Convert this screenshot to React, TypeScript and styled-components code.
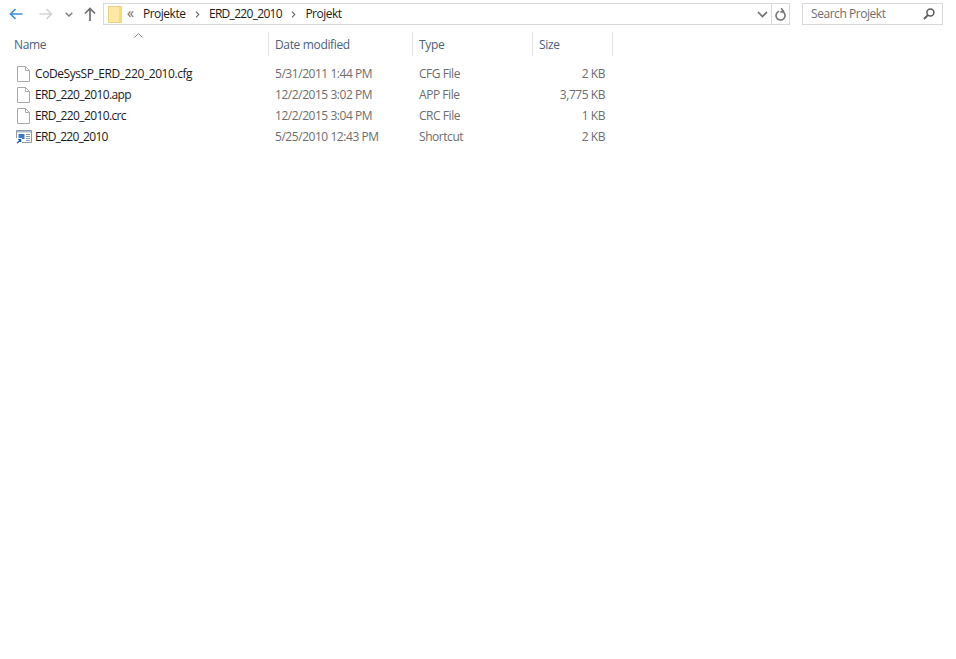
import React from "react";
import styled, { createGlobalStyle } from "styled-components";

const Global = createGlobalStyle`
  html, body { margin: 0; padding: 0; background: #fff; }
  body { font-family: "Open Sans", "Noto Sans", "Liberation Sans", sans-serif; font-size: 12px; }
`;

const Page = styled.div`
  width: 956px;
  height: 659px;
  overflow: hidden;
  background: #fff;
  display: flex;
  flex-direction: column;
`;

const Toolbar = styled.div`
  display: flex;
  align-items: center;
  height: 22px;
  padding: 3px 13px 0 0;
`;

const NavButton = styled.button<{ $w: number }>`
  width: ${(p) => p.$w}px;
  height: 22px;
  padding: 0;
  border: 0;
  background: none;
  display: flex;
  align-items: center;
  justify-content: center;
`;

const AddressBar = styled.div`
  margin-left: 3px;
  width: 687px;
  height: 22px;
  box-sizing: border-box;
  border: 1px solid #d9d9d9;
  display: flex;
  align-items: center;
`;

const FolderSlot = styled.div`
  width: 21px;
  display: flex;
  justify-content: center;
`;

const Crumb = styled.span<{ $track: number }>`
  color: #1a1a1a;
  white-space: nowrap;
  letter-spacing: ${(p) => p.$track}px;
  margin-top: -2px;
`;

const Chevrons = styled.span`
  color: #666;
  width: 18px;
  padding-right: 7px;
  box-sizing: border-box;
  text-align: center;
  font-size: 14px;
  line-height: 1;
  margin-top: -2px;
`;

const CrumbSep = styled.span`
  width: 23.5px;
  display: flex;
  justify-content: center;
`;

const Spacer = styled.div`
  flex: 1;
`;

const AddressEnd = styled.div`
  width: 17px;
  height: 20px;
  display: flex;
  align-items: center;
  justify-content: center;
`;

const Refresh = styled.div`
  width: 17px;
  height: 20px;
  border-left: 1px solid #d9d9d9;
  display: flex;
  align-items: center;
  justify-content: center;
`;

const SearchBox = styled.div`
  margin-left: 12px;
  width: 141px;
  height: 22px;
  box-sizing: border-box;
  border: 1px solid #d9d9d9;
  display: flex;
  align-items: center;
  justify-content: space-between;
  padding: 0 7px 0 8px;
`;

const SearchText = styled.span`
  color: #6d6d6d;
  letter-spacing: -0.45px;
  margin-top: -2px;
`;

const Header = styled.div`
  position: relative;
  display: flex;
  height: 24px;
  margin-top: 7px;
  margin-left: 8px;
`;

const HeadCell = styled.div<{ $w: number }>`
  width: ${(p) => p.$w}px;
  box-sizing: border-box;
  padding-left: 6px;
  border-right: 1px solid #e5e5e5;
  color: #4c607a;
  display: flex;
  align-items: center;
  letter-spacing: -0.35px;
`;

const SortArrow = styled.svg`
  position: absolute;
  left: 126px;
  top: 1px;
`;

const Rows = styled.div`
  margin-top: 7px;
  margin-left: 8px;
  display: flex;
  flex-direction: column;
`;

const Row = styled.div`
  display: flex;
  height: 21px;
  align-items: center;
`;

const NameCell = styled.div<{ $track: number }>`
  width: 261px;
  box-sizing: border-box;
  padding-left: 7px;
  display: flex;
  align-items: center;
  gap: 3px;
  color: #1a1a1a;
  letter-spacing: ${(p) => p.$track}px;
  white-space: nowrap;
`;

const IconSlot = styled.span`
  width: 17px;
  height: 17px;
  display: flex;
  align-items: center;
  justify-content: center;
`;

const DetailCell = styled.div<{ $w: number; $right?: boolean }>`
  width: ${(p) => p.$w}px;
  box-sizing: border-box;
  padding: ${(p) => (p.$right ? "0 8px 0 0" : "0 0 0 6px")};
  text-align: ${(p) => (p.$right ? "right" : "left")};
  color: #6d6d6d;
  letter-spacing: -0.45px;
  white-space: nowrap;
`;

const BackIcon = () => (
  <svg width="14" height="12" viewBox="0 0 14 12" fill="none" stroke="#3f8fdc" strokeWidth="1.7">
    <path d="M13.5 6H1.5M6.5 1 1.5 6l5 5" />
  </svg>
);
const ForwardIcon = () => (
  <svg width="14" height="12" viewBox="0 0 14 12" fill="none" stroke="#d4d4d4" strokeWidth="1.7" style={{ marginLeft: 2 }}>
    <path d="M.5 6h12M7.5 1l5 5-5 5" />
  </svg>
);
const DownIcon = () => (
  <svg width="8" height="5" viewBox="0 0 8 5" fill="none" stroke="#7a7a7a" strokeWidth="1.4">
    <path d="M.7.7 4 4 7.3.7" />
  </svg>
);
const UpIcon = () => (
  <svg width="12" height="14" viewBox="0 0 12 14" fill="none" stroke="#6f6f6f" strokeWidth="1.7">
    <path d="M6 14V1.5M1 6.5l5-5 5 5" />
  </svg>
);
const FolderIcon = () => (
  <svg width="14" height="17" viewBox="0 0 14 17">
    <path d="M.5.5h12.8v16H.5z" fill="#fde8a6" stroke="#e8cf85" />
    <path d="M11 1h2v15h-2z" fill="#f6d985" />
  </svg>
);
const SepIcon = () => (
  <svg width="5" height="7" viewBox="0 0 5 7" fill="none" stroke="#6a6a6a" strokeWidth="1.1">
    <path d="M1 .7 3.8 3.5 1 6.3" />
  </svg>
);
const AddrDown = () => (
  <svg width="11" height="7" viewBox="0 0 11 7" fill="none" stroke="#6f6f6f" strokeWidth="1.7">
    <path d="M1 1l4.5 4.5L10 1" />
  </svg>
);
const RefreshIcon = () => (
  <svg width="11" height="13" viewBox="0 0 11 13" fill="none" stroke="#757575" strokeWidth="1.6">
    <path d="M4.2 3.2a4.5 4.5 0 1 0 3.2.2" />
    <path d="M3.2.6 5.4 3.4l-3 1.2" transform="translate(3 -.3)" />
  </svg>
);
const SearchIcon = () => (
  <svg width="12" height="12" viewBox="0 0 12 12" fill="none" stroke="#5c5c5c" strokeWidth="1.5">
    <circle cx="7.4" cy="4.6" r="3.5" />
    <path d="M4.8 7.2 1 11" strokeWidth="1.9" />
  </svg>
);
const FileIcon = () => (
  <svg width="13" height="16" viewBox="0 0 13 16" fill="#fff" stroke="#a9a9a9">
    <path d="M.5.5h8l4 4v11H.5z" />
    <path d="M8.5.5v4h4" fill="none" />
  </svg>
);
const ShortcutIcon = () => (
  <svg width="16" height="14" viewBox="0 0 16 14">
    <path d="M.5.5h15v12H.5z" fill="#fff" stroke="#8a98a8" />
    <path d="M1 1h14v1.5H1z" fill="#a9bcd0" />
    <path d="M2.5 4h6v5h-6z" fill="#3c7ac8" />
    <path d="M10 4.5h4M10 6.5h4M10 8.5h4M10 10.5h4" stroke="#8a98a8" />
    <path d="M0 8h6v6H0z" fill="#fff" />
    <path d="M1.2 13l3-3M2.2 9.5h2.5V12" stroke="#1f5fb5" strokeWidth="1.2" fill="none" />
  </svg>
);

const files = [
  { name: "CoDeSysSP_ERD_220_2010.cfg", date: "5/31/2011 1:44 PM", type: "CFG File", size: "2 KB", link: false, track: -0.43 },
  { name: "ERD_220_2010.app", date: "12/2/2015 3:02 PM", type: "APP File", size: "3,775 KB", link: false, track: -0.62 },
  { name: "ERD_220_2010.crc", date: "12/2/2015 3:04 PM", type: "CRC File", size: "1 KB", link: false, track: -0.62 },
  { name: "ERD_220_2010", date: "5/25/2010 12:43 PM", type: "Shortcut", size: "2 KB", link: true, track: -0.72 },
];

export default function App() {
  return (
    <Page>
      <Global />
      <Toolbar>
        <NavButton $w={32}><BackIcon /></NavButton>
        <NavButton $w={26}><ForwardIcon /></NavButton>
        <NavButton $w={22}><DownIcon /></NavButton>
        <NavButton $w={20}><UpIcon /></NavButton>
        <AddressBar>
          <FolderSlot><FolderIcon /></FolderSlot>
          <Chevrons>«</Chevrons>
          <Crumb $track={-0.5}>Projekte</Crumb>
          <CrumbSep><SepIcon /></CrumbSep>
          <Crumb $track={-0.7}>ERD_220_2010</Crumb>
          <CrumbSep><SepIcon /></CrumbSep>
          <Crumb $track={-0.5}>Projekt</Crumb>
          <Spacer />
          <AddressEnd><AddrDown /></AddressEnd>
          <Refresh><RefreshIcon /></Refresh>
        </AddressBar>
        <SearchBox>
          <SearchText>Search Projekt</SearchText>
          <SearchIcon />
        </SearchBox>
      </Toolbar>
      <Header>
        <SortArrow width="9" height="5" viewBox="0 0 9 5" fill="none" stroke="#8a8a8a">
          <path d="M.5 4.5l4-4 4 4" />
        </SortArrow>
        <HeadCell $w={261}>Name</HeadCell>
        <HeadCell $w={144}>Date modified</HeadCell>
        <HeadCell $w={120}>Type</HeadCell>
        <HeadCell $w={80}>Size</HeadCell>
      </Header>
      <Rows>
        {files.map((f) => (
          <Row key={f.name}>
            <NameCell $track={f.track}>
              <IconSlot>{f.link ? <ShortcutIcon /> : <FileIcon />}</IconSlot>
              {f.name}
            </NameCell>
            <DetailCell $w={144}>{f.date}</DetailCell>
            <DetailCell $w={120}>{f.type}</DetailCell>
            <DetailCell $w={80} $right>{f.size}</DetailCell>
          </Row>
        ))}
      </Rows>
    </Page>
  );
}
